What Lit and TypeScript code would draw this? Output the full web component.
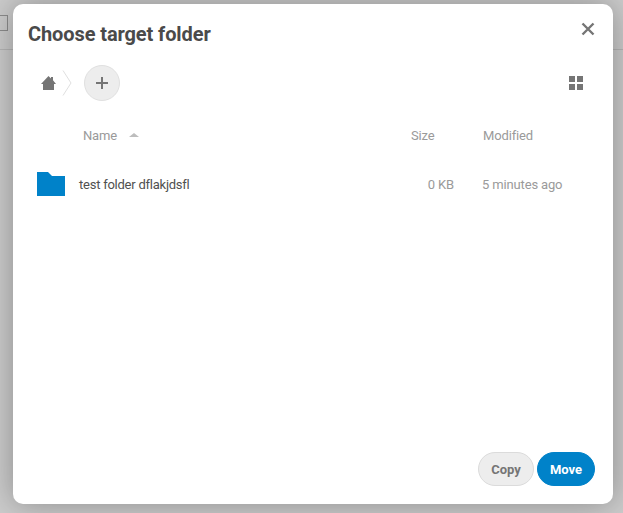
import { LitElement, html, css } from "lit";
import { customElement } from "lit/decorators.js";

@customElement("app-root")
export class AppRoot extends LitElement {
  static styles = css`
    :host {
      display: block;
      position: relative;
      width: 623px;
      height: 513px;
      overflow: hidden;
      font-family: Roboto, "Liberation Sans", sans-serif;
      color: #454545;
      background: #fff;
    }
    .page-header {
      height: 50px;
      box-sizing: border-box;
      border-bottom: 1px solid #e4e4e4;
      display: flex;
      align-items: flex-start;
      padding-top: 15px;
    }
    .page-check {
      width: 8px;
      height: 16px;
      box-sizing: border-box;
      border: 1px solid #b0b0b0;
      border-left: none;
    }
    .dim {
      position: absolute;
      inset: 0;
      background: rgba(0, 0, 0, 0.2);
    }
    .dialog {
      position: absolute;
      left: 13px;
      top: 4px;
      width: 600px;
      height: 500px;
      box-sizing: border-box;
      background: #fff;
      border-radius: 10px;
      box-shadow: 0 0 32px rgba(0, 0, 0, 0.32);
      display: flex;
      flex-direction: column;
      padding: 0 18px 18px 15px;
    }
    h2 {
      margin: 0;
      padding: 18px 0 0 0;
      font-size: 20px;
      line-height: 24px;
      font-weight: 700;
      letter-spacing: -0.1px;
      color: #4a4a4a;
    }
    .close {
      position: absolute;
      top: 18px;
      right: 17px;
      width: 16px;
      height: 14px;
      display: block;
    }
    .nav {
      display: flex;
      align-items: center;
      height: 38px;
      margin-top: 18px;
      padding-left: 12px;
    }
    .home { width: 16px; height: 16px; display: block; }
    .crumb { width: 10px; height: 28px; display: block; margin-left: 6px; }
    .add {
      width: 36px;
      height: 36px;
      box-sizing: border-box;
      margin-left: 12px;
      border-radius: 50%;
      background: #ededed;
      border: 1px solid #e0e0e0;
      display: flex;
      align-items: center;
      justify-content: center;
    }
    .add svg { width: 14px; height: 14px; display: block; }
    .grid-btn { width: 14px; height: 14px; display: block; margin-left: auto; margin-right: 12px; }
    .thead {
      display: grid;
      grid-template-columns: 383px 72px 1fr;
      height: 20px;
      margin-top: 23px;
      align-items: center;
      font-size: 13px;
      letter-spacing: -0.15px;
      color: #9a9a9a;
    }
    .thead .name { padding-left: 55px; display: flex; align-items: center; gap: 12px; }
    .sort { width: 0; height: 0; border-left: 5px solid transparent; border-right: 5px solid transparent; border-bottom: 4px solid #bdbdbd; }
    .row {
      display: grid;
      grid-template-columns: 42px 330px 54px 1fr;
      align-items: center;
      height: 34px;
      margin-top: 22px;
      font-size: 13px;
      letter-spacing: -0.15px;
    }
    .folder { width: 28px; height: 24px; display: block; margin-left: 9px; }
    .fname { padding-left: 9px; color: #505050; letter-spacing: -0.24px; }
    .size { text-align: right; color: #9a9a9a; }
    .date { padding-left: 28px; color: #9a9a9a; }
    .actions {
      margin-top: auto;
      display: flex;
      justify-content: flex-end;
      gap: 3px;
    }
    button {
      height: 34px;
      border-radius: 17px;
      font: 700 13px Roboto, "Liberation Sans", sans-serif;
      padding: 0;
      box-sizing: border-box;
    }
    .copy { width: 56px; background: #ededed; border: 1px solid #dbdbdb; color: #757575; }
    .move { width: 58px; background: #0082c9; border: 1px solid #0082c9; color: #fff; }
  `;

  render() {
    return html`
      <div class="page-header"><div class="page-check"></div></div>
      <div class="dim"></div>
      <div class="dialog">
        <h2>Choose target folder</h2>
        <svg class="close" viewBox="0 0 16 14">
          <path d="M2.5 1.5 L13.5 12.5 M13.5 1.5 L2.5 12.5" stroke="#757575" stroke-width="2.4" fill="none"/>
        </svg>
        <div class="nav">
          <svg class="home" viewBox="0 0 16 16">
            <path d="M8.5 1 L11 3.4 V2 H13 V5.2 L16 9 H14 V15 H3 V9 H1 Z" fill="#757575"/>
          </svg>
          <svg class="crumb" viewBox="0 0 10 28">
            <path d="M1 1.5 L9 14 L1 26.5" stroke="#e0e0e0" stroke-width="1" fill="none"/>
          </svg>
          <div class="add">
            <svg viewBox="0 0 14 14"><path d="M7 1 V13 M1 7 H13" stroke="#757575" stroke-width="2" fill="none"/></svg>
          </div>
          <svg class="grid-btn" viewBox="0 0 14 14">
            <path d="M0 0 H6 V6 H0 Z M8 0 H14 V6 H8 Z M0 8 H6 V14 H0 Z M8 8 H14 V14 H8 Z" fill="#757575"/>
          </svg>
        </div>
        <div class="thead">
          <div class="name"><span>Name</span><span class="sort"></span></div>
          <div>Size</div>
          <div>Modified</div>
        </div>
        <div class="row">
          <svg class="folder" viewBox="0 0 28 24">
            <path d="M0 0 H11 L15 4 H28 V24 H0 Z" fill="#0082c9"/>
          </svg>
          <div class="fname">test folder dflakjdsfl</div>
          <div class="size">0 KB</div>
          <div class="date">5 minutes ago</div>
        </div>
        <div class="actions">
          <button class="copy">Copy</button>
          <button class="move">Move</button>
        </div>
      </div>
    `;
  }
}
